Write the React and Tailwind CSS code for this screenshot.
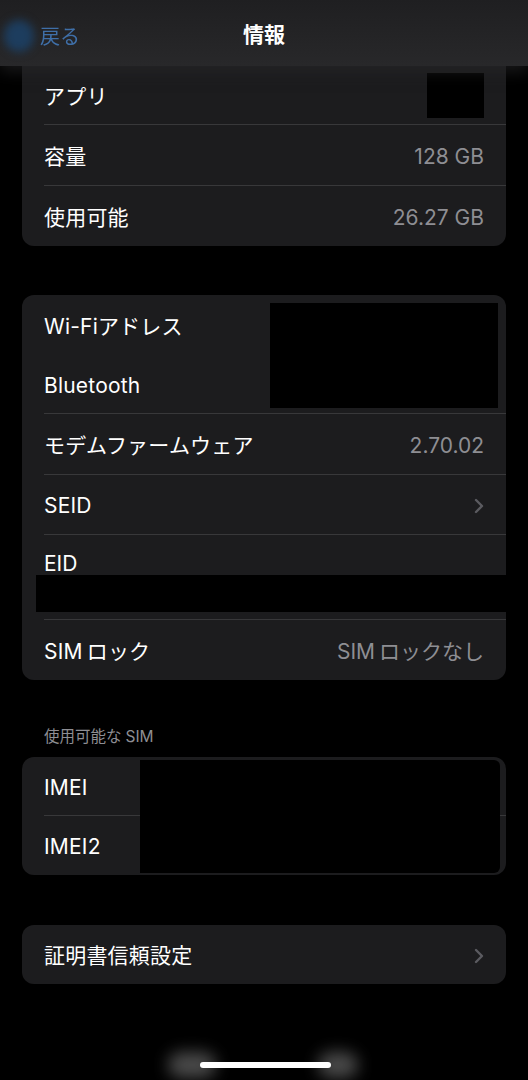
import React from "react";

const FONT = { fontFamily: 'Inter, "Noto Sans CJK JP", "Noto Sans", sans-serif' };

function Chevron() {
  return (
    <svg width="10" height="16" viewBox="0 0 10 16" fill="none">
      <path d="M2 2l6 6-6 6" stroke="#5b5b60" strokeWidth="2.4" strokeLinecap="round" strokeLinejoin="round" />
    </svg>
  );
}

function Row({ label, value, chevron, last, h = "h-[60px]", children }) {
  return (
    <div className="pl-[22px]">
      <div className={`flex items-center justify-between pr-[22px] pt-[3px] ${h} ${last ? "" : "border-b border-[#38383a]"}`}>
        <span className="text-[21px] text-white tracking-[0.2px]">{label}</span>
        {value && <span className="text-[21px] text-[#8e8e93]">{value}</span>}
        {chevron && <Chevron />}
        {children}
      </div>
    </div>
  );
}

export default function App() {
  return (
    <div className="relative w-[528px] h-[1080px] bg-black overflow-hidden" style={FONT}>
      {/* Header */}
      <div className="relative z-10 h-[66px] bg-gradient-to-b from-[#1f1f21] to-[#28282a] flex items-center justify-center shadow-[0_6px_14px_rgba(40,40,42,0.6)]">
        <div className="absolute left-[4px] top-[20px] w-[30px] h-[32px] rounded-full bg-[#1d3d5e] blur-[4px]"></div>
        <span className="absolute left-[40px] top-[22px] text-[20px] text-[#3f6fa8] blur-[0.7px]">戻る</span>
        <span className="text-[21px] font-bold text-white pt-[4px]">情報</span>
      </div>

      <div className="flex flex-col px-[22px]">
        {/* Card 1 */}
        <div className="bg-[#1c1c1e] rounded-b-[12px]">
          <Row label="アプリ" h="h-[59px]">
            <div className="-mt-[3px] w-[57px] h-[45px] bg-black"></div>
          </Row>
          <Row label="容量" value="128 GB" h="h-[61px]" />
          <Row label="使用可能" value="26.27 GB" last />
        </div>

        {/* Card 2 */}
        <div className="relative mt-[49px] bg-[#1c1c1e] rounded-[12px]">
          <Row label="Wi-Fiアドレス" last />
          <Row label="Bluetooth" h="h-[59px]" />
          <Row label="モデムファームウェア" value="2.70.02" h="h-[61px]" />
          <Row label="SEID" chevron />
          <div className="pl-[22px]">
            <div className="h-[85px] border-b border-[#38383a] pt-[13px]">
              <span className="text-[21px] text-white">EID</span>
            </div>
          </div>
          <Row label={<>SIM<span className="ml-[4px]">ロック</span></>} value={<>SIM<span className="ml-[4px]">ロックなし</span></>} last />
          <div className="absolute left-[248px] top-[8px] w-[228px] h-[105px] bg-black"></div>
          <div className="absolute left-[14px] top-[280px] w-[470px] h-[37px] bg-black"></div>
        </div>

        {/* Section header */}
        <div className="mt-[46px] pl-[22px] h-[22px] flex items-center text-[15.5px] text-[#8e8e93]">
          使用可能な<span className="ml-[4px]">SIM</span>
        </div>

        {/* Card 3 */}
        <div className="relative mt-[9px] bg-[#1c1c1e] rounded-[12px]">
          <Row label="IMEI" h="h-[59px]" />
          <Row label="IMEI2" h="h-[59px]" last />
          <div className="absolute left-[118px] top-[3px] w-[360px] h-[113px] bg-black rounded-r-[6px]"></div>
        </div>

        {/* Card 4 */}
        <div className="mt-[50px] bg-[#1c1c1e] rounded-[12px]">
          <Row label="証明書信頼設定" chevron last h="h-[59px]" />
        </div>
      </div>

      {/* Home indicator */}
      <div className="absolute left-[168px] top-[1052px] w-[48px] h-[26px] rounded-full bg-[#6a6a6a] blur-[8px] opacity-70"></div>
      <div className="absolute left-[318px] top-[1052px] w-[40px] h-[26px] rounded-full bg-[#6a6a6a] blur-[8px] opacity-70"></div>
      <div className="absolute left-[200px] top-[1062px] w-[131px] h-[6px] rounded-full bg-white"></div>
    </div>
  );
}
